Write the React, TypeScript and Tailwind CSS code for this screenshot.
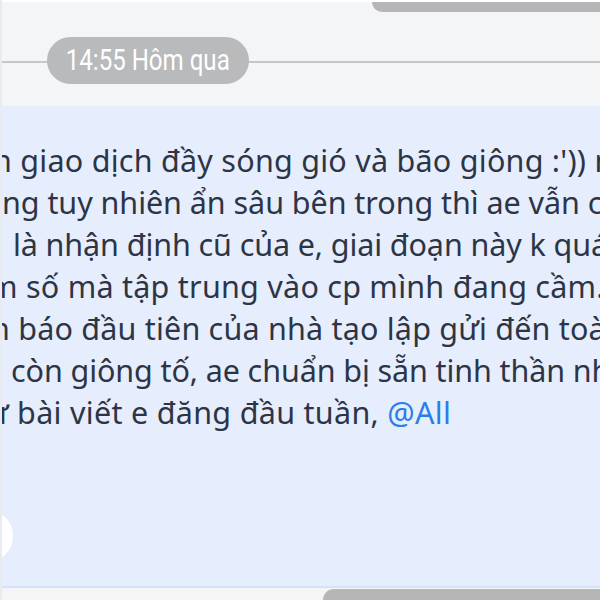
import React from "react";

const lines: { text: React.ReactNode; cls: string }[] = [
  { text: "n giao dịch đầy sóng gió và bão giông :')) mọi", cls: "ml-[-9px] tracking-[0.25px]" },
  { text: "ng tuy nhiên ẩn sâu bên trong thì ae vẫn còn", cls: "ml-[0px] tracking-[-0.05px]" },
  { text: "là nhận định cũ của e, giai đoạn này k quá", cls: "ml-[11px] tracking-[-0.1px]" },
  { text: "m số mà tập trung vào cp mình đang cầm.", cls: "ml-[-13px] tracking-[0.25px]" },
  { text: "n báo đầu tiên của nhà tạo lập gửi đến toàn", cls: "ml-[-11px] tracking-[0.2px]" },
  { text: "còn giông tố, ae chuẩn bị sẵn tinh thần nhé", cls: "ml-[9px] tracking-[-0.1px]" },
  {
    text: (
      <>
        ư bài viết e đăng đầu tuần, <span className="text-[#2b7de9]">@All</span>
      </>
    ),
    cls: "ml-[-14px] tracking-[0.3px]",
  },
];

export default function App() {
  return (
    <div
      className="w-[600px] h-[600px] overflow-hidden bg-[#f4f5f7] flex flex-col border-l-2 border-[#e9ebee]"
      style={{ fontFamily: "'Noto Sans', 'Open Sans', sans-serif" }}
    >
      {/* top area */}
      <div className="h-[106px] flex flex-col border-t-2 border-white">
        <div className="flex justify-end">
          <div className="w-[228px] h-[10px] bg-[#b6b6b8] rounded-bl-[12px]" />
        </div>
        <div className="relative mt-[25px] flex items-center">
          <div className="absolute left-0 right-0 top-1/2 h-[2px] bg-[#c6c7c9]" />
          <div className="relative ml-[45px] w-[202px] h-[47px] rounded-full bg-[#b9babc] flex items-center justify-center">
            <span
              className="whitespace-nowrap text-white text-[29px] leading-none scale-x-[0.83] inline-block"
              style={{ fontFamily: "Roboto, 'Noto Sans', sans-serif" }}
            >
              14:55 Hôm qua
            </span>
          </div>
        </div>
      </div>
      {/* message */}
      <div className="relative h-[482px] bg-[#e6edfd] border-b-2 border-[#d4e2fa] overflow-hidden pt-[33px] text-[30.5px] leading-[42px] text-[#2d3545]">
        {lines.map((l, i) => (
          <div key={i} className={`whitespace-nowrap ${l.cls}`}>
            {l.text}
          </div>
        ))}
        <div className="absolute left-[-41px] top-[404px] w-[52px] h-[52px] rounded-full bg-white" />
      </div>
      {/* bottom */}
      <div className="flex-1 flex justify-end items-end">
        <div className="w-[277px] h-[11px] bg-[#b6b6b8] rounded-tl-[12px]" />
      </div>
    </div>
  );
}
